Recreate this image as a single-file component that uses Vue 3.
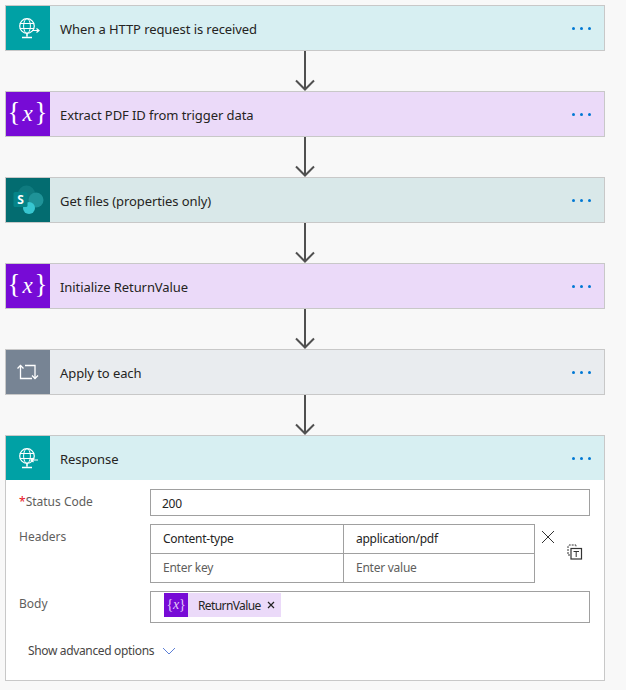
<script setup>
const steps = [
  { title: 'When a HTTP request is received', kind: 'http', color: '#00a1a5', tint: '#d7eff2' },
  { title: 'Extract PDF ID from trigger data', kind: 'var', color: '#770bd6', tint: '#ebdaf9' },
  { title: 'Get files (properties only)', kind: 'sp', color: '#036c70', tint: '#d9e8e9' },
  { title: 'Initialize ReturnValue', kind: 'var', color: '#770bd6', tint: '#ebdaf9' },
  { title: 'Apply to each', kind: 'loop', color: '#778494', tint: '#e9ecef' },
]
</script>

<template>
  <div class="flow">
    <template v-for="step in steps" :key="step.title">
      <div class="card">
        <div class="head" :style="{ background: step.tint }">
          <div class="ico" :style="{ background: step.color }">
            <svg v-if="step.kind === 'http'" width="24" height="24" viewBox="0 0 24 24" fill="none" stroke="#fff">
              <circle cx="11" cy="10" r="7.3" stroke-width="1.2" />
              <ellipse cx="11" cy="10" rx="3.4" ry="7.3" />
              <path d="M3.8 7.5h14.4M3.8 12.5h14.4" />
              <path d="M11 17.5v3M6 21.5h10" stroke-width="1.6" />
              <path d="M16 14.5h7M20.5 12.5l2.5 2-2.5 2" stroke-width="1.2" />
            </svg>
            <span v-else-if="step.kind === 'var'" class="vartxt">{<i>x</i>}</span>
            <svg v-else-if="step.kind === 'sp'" width="32" height="32" viewBox="0 0 32 32">
              <circle cx="14.5" cy="10" r="8.5" fill="#0f7b7f" />
              <circle cx="24" cy="16" r="7.5" fill="#1f9398" />
              <circle cx="17" cy="24" r="6" fill="#37c6d0" />
              <rect x="1.5" y="8" width="14" height="15" rx="1.5" fill="#058488" />
              <text x="8.5" y="20" class="sptxt">S</text>
            </svg>
            <svg v-else width="24" height="24" viewBox="0 0 24 24" fill="none" stroke="#fff" stroke-width="1.3">
              <path d="M4.5 5.5V18.5H16" />
              <path d="M1.5 8.5l3-3 3 3" />
              <path d="M9 5.5H19V18.5" />
              <path d="M16 15.5l3 3 3-3" />
            </svg>
          </div>
          <span class="title">{{ step.title }}</span>
          <span class="dots"><b></b><b></b><b></b></span>
        </div>
      </div>
      <div class="link">
        <svg width="20" height="40" viewBox="0 0 20 40" fill="none" stroke="#505050" stroke-width="2">
          <path d="M10 0v38.5M1 29.5l9 9 9-9" />
        </svg>
      </div>
    </template>

    <div class="card">
      <div class="head resp-head">
        <div class="ico resp-ico">
          <svg width="24" height="24" viewBox="0 0 24 24" fill="none" stroke="#fff">
            <circle cx="11" cy="10" r="7.3" stroke-width="1.2" />
            <ellipse cx="11" cy="10" rx="3.4" ry="7.3" />
            <path d="M3.8 7.5h14.4M3.8 12.5h14.4" />
            <path d="M11 17.5v3M6 21.5h10" stroke-width="1.6" />
            <path d="M15 14h7M17.5 12l-2.5 2 2.5 2" stroke-width="1.2" />
          </svg>
        </div>
        <span class="title">Response</span>
        <span class="dots"><b></b><b></b><b></b></span>
      </div>

      <div class="form">
        <div class="row">
          <label class="lbl"><em>*</em>Status Code</label>
          <div class="input status">200</div>
        </div>

        <div class="row">
          <label class="lbl">Headers</label>
          <div class="table">
            <div class="cell strong">Content-type</div>
            <div class="cell strong">application/pdf</div>
            <div class="cell hint">Enter key</div>
            <div class="cell hint">Enter value</div>
          </div>
          <div class="tools">
            <svg class="close" width="14" height="14" viewBox="0 0 14 14" fill="none" stroke="#333" stroke-width="1">
              <path d="M1 1l12 12M13 1L1 13" />
            </svg>
            <svg class="textmode" width="16" height="16" viewBox="0 0 16 16" fill="none" stroke="#333">
              <path d="M3 11H1V2.5L2 1h7v2" stroke-dasharray="2 1" />
              <rect x="4" y="4.5" width="10.5" height="10.5" stroke-width="1.2" />
              <path d="M6.5 7.5h5.5M9.2 7.5v5.5" />
            </svg>
          </div>
        </div>

        <div class="row">
          <label class="lbl">Body</label>
          <div class="input body">
            <span class="token">
              <span class="token-ico">{<i>x</i>}</span>
              <span class="token-txt">ReturnValue</span>
              <svg width="8" height="8" viewBox="0 0 8 8" fill="none" stroke="#222" stroke-width="1.2">
                <path d="M1 1l6 6M7 1L1 7" />
              </svg>
            </span>
          </div>
        </div>

        <div class="advanced">
          <span>Show advanced options</span>
          <svg width="14" height="8" viewBox="0 0 14 8" fill="none" stroke="#5c7fd6" stroke-width="1">
            <path d="M1 1l6 6 6-6" />
          </svg>
        </div>
      </div>
    </div>
  </div>
</template>

<style scoped>
.flow {
  width: 626px;
  height: 690px;
  box-sizing: border-box;
  padding: 5px 21px 0 5px;
  background: #f8f8f8;
  font-family: "Noto Sans", "Open Sans", sans-serif;
  font-size: 13px;
  color: #252423;
  overflow: hidden;
}
.card {
  border: 1px solid #c8c8c8;
  background: #fff;
}
.head {
  display: flex;
  align-items: center;
  height: 44px;
}
.resp-head {
  background: #d7eff2;
}
.ico {
  width: 44px;
  height: 44px;
  display: flex;
  align-items: center;
  justify-content: center;
  flex: none;
}
.resp-ico {
  background: #00a1a5;
}
.vartxt {
  color: #fff;
  font-family: "Liberation Serif", serif;
  font-size: 27px;
  line-height: 1;
  letter-spacing: 1px;
  padding-bottom: 4px;
}
.vartxt i {
  font-size: 23px;
  padding: 0 1px;
}
.sptxt {
  fill: #fff;
  font-family: "Noto Sans", sans-serif;
  font-size: 12px;
  font-weight: 700;
  text-anchor: middle;
}
.title {
  margin-left: 10px;
  padding-top: 2px;
  flex: 1;
  letter-spacing: -0.08px;
}
.dots {
  display: flex;
  gap: 5px;
  margin-right: 13px;
}
.dots b {
  width: 3px;
  height: 3px;
  border-radius: 50%;
  background: #0078d4;
}
.link {
  height: 40px;
  display: flex;
  justify-content: center;
}
.form {
  padding: 9px 14px 21px 13px;
  font-size: 12px;
  letter-spacing: -0.25px;
}
.row {
  display: flex;
  margin-bottom: 8px;
}
.lbl {
  width: 131px;
  flex: none;
  color: #605e5c;
  line-height: 25px;
  letter-spacing: 0;
}
.lbl em {
  color: #e81123;
  font-style: normal;
}
.input {
  width: 440px;
  box-sizing: border-box;
  border: 1px solid #a0a0a0;
  background: #fff;
  color: #252423;
}
.status {
  height: 27px;
  line-height: 27px;
  padding-left: 11px;
}
.table {
  width: 385px;
  height: 59px;
  box-sizing: border-box;
  border: 1px solid #a0a0a0;
  display: grid;
  grid-template-columns: 193px 1fr;
  grid-template-rows: 1fr 1fr;
}
.cell {
  line-height: 28px;
  padding-left: 12px;
}
.cell:nth-child(odd) {
  border-right: 1px solid #a0a0a0;
}
.cell:nth-child(-n+2) {
  border-bottom: 1px solid #a0a0a0;
}
.strong {
  color: #252423;
}
.hint {
  color: #605e5c;
}
.tools {
  position: relative;
  flex: 1;
}
.close {
  position: absolute;
  left: 6px;
  top: 6px;
}
.textmode {
  position: absolute;
  left: 32px;
  top: 20px;
}
.body {
  height: 32px;
  padding: 1px 13px;
}
.token {
  display: inline-flex;
  align-items: center;
  height: 24px;
  background: #ebdaf9;
  padding-right: 6px;
}
.token-ico {
  width: 24px;
  height: 24px;
  background: #770bd6;
  color: #e4cdf8;
  font-family: "Liberation Serif", serif;
  font-size: 14px;
  line-height: 23px;
  text-align: center;
}
.token-txt {
  margin: 0 6px 0 10px;
  color: #252423;
  letter-spacing: -0.6px;
}
.advanced {
  display: flex;
  align-items: center;
  gap: 8px;
  margin: 19px 0 0 9px;
  color: #484644;
  letter-spacing: -0.35px;
}
</style>

<style>
html, body {
  background: #f8f8f8;
}
</style>
